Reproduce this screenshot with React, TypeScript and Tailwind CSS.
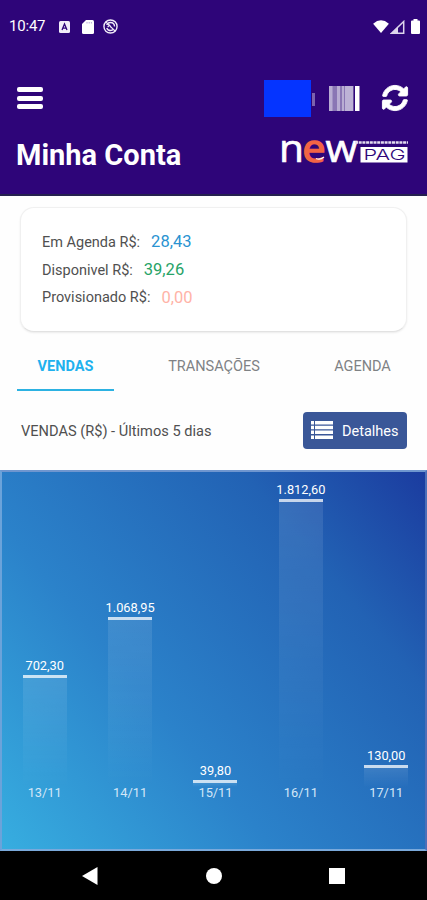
import { FaSyncAlt } from 'react-icons/fa';

const balances = [
  { label: 'Em Agenda R$:', value: '28,43', color: 'text-[#2a93d1]' },
  { label: 'Disponivel R$:', value: '39,26', color: 'text-[#27a367]' },
  { label: 'Provisionado R$:', value: '0,00', color: 'text-[#ffb3a7]' },
];

const sales = [
  { day: '13/11', label: '702,30', value: 702.3 },
  { day: '14/11', label: '1.068,95', value: 1068.95 },
  { day: '15/11', label: '39,80', value: 39.8 },
  { day: '16/11', label: '1.812,60', value: 1812.6 },
  { day: '17/11', label: '130,00', value: 130 },
];

const PX_PER_REAL = 0.1583;

function StatusBar() {
  return (
    <div className="flex h-[53px] items-center pl-[9px] pr-[7px] text-white">
      <span className="w-[37px] text-[15px] leading-none tracking-[-0.2px]">10:47</span>
      <svg className="ml-[13px]" width="11" height="12" viewBox="0 0 11 12">
        <rect width="11" height="12" rx="1.5" fill="#f1edf8" />
        <path d="M3 9 5.5 3 8 9M4 7.2h3" fill="none" stroke="#2e0579" strokeWidth="1.3" />
      </svg>
      <svg className="ml-3" width="12" height="14" viewBox="0 0 12 14">
        <path d="M4 0h6.5Q12 0 12 1.5v11q0 1.5-1.5 1.5h-9Q0 14 0 12.5V4z" fill="#fff" />
        <path d="M5 2v1.5M7.2 2v1.5M9.4 2v1.5" stroke="#b9abd8" strokeWidth="1" />
      </svg>
      <svg className="ml-[9px]" width="15" height="15" viewBox="0 0 16 16" fill="none" stroke="#f1edf8">
        <circle cx="8" cy="8" r="7" strokeWidth="1.5" />
        <path d="M4 6.5Q5 3.8 8 3.8q4 0 4.3 4.2M4 9.5q1 2.8 4 2.8 2 0 3-1" strokeWidth="1.5" />
        <path d="m3 3 10 10M5 8.5l2-2 2 3" strokeWidth="1.3" />
      </svg>
      <svg className="ml-auto" width="16" height="13" viewBox="0 0 17 14">
        <path d="M0 4Q8.5-3.5 17 4L8.5 14z" fill="#fff" />
      </svg>
      <svg className="ml-px" width="15" height="14" viewBox="0 0 15 14">
        <path d="M1.5 13.2 13.7 1.5v11.7z" fill="none" stroke="#ddd5ec" strokeWidth="1.5" />
        <path d="M8 7v6H1.5z" fill="#ddd5ec" />
      </svg>
      <svg className="ml-[6px]" width="9" height="15" viewBox="0 0 9 15">
        <path d="M2.5 0h4v1.5H8q1 0 1 1V14q0 1-1 1H1q-1 0-1-1V2.5q0-1 1-1h1.5z" fill="#fff" />
      </svg>
    </div>
  );
}

function BarcodeIcon() {
  return (
    <svg width="31" height="25" viewBox="0 0 31 25">
      <rect width="25" height="25" fill="#8a76b4" />
      <path d="M0 0h3.5v25H0zM8 0h3v25H8zM13 0h2v25h-2z" fill="#b9add3" />
      <path d="M16 0h8.5v25H16z" fill="#bdb2d6" />
      <path d="M26 0h4.5v25H26z" fill="#fff" />
      <path d="M24.5 0H26v25h-1.5z" fill="#2e0579" />
    </svg>
  );
}

function Logo() {
  return (
    <svg className="-my-[10px] overflow-visible" width="127" height="60" viewBox="0 0 127 60">
      <g fontFamily="Open Sans" fontSize="38" strokeWidth="0.7">
        <text x="-2" y="37" fill="#fff" stroke="#fff" textLength="25" lengthAdjust="spacingAndGlyphs">n</text>
        <text x="44.5" y="37" fill="#fff" stroke="#fff" textLength="32" lengthAdjust="spacingAndGlyphs">w</text>
        <text x="21.5" y="37" fill="#f26445" stroke="#f26445" strokeWidth="1.6" textLength="23" lengthAdjust="spacingAndGlyphs">e</text>
      </g>
      <path d="M35 33.5q4 2 8-1.5" fill="none" stroke="#fff" strokeWidth="1.2" />
      <path d="M74 17.5h53" stroke="#e3dcf0" strokeWidth="2.5" strokeDasharray="3 .7" />
      <rect x="79.5" y="22" width="47" height="15.5" fill="#fff" />
      <text x="82.5" y="35" fill="#2e0579" fontFamily="Inter" fontWeight="300" fontSize="15" textLength="42" lengthAdjust="spacingAndGlyphs">PAG</text>
    </svg>
  );
}

function Header() {
  return (
    <header className="h-[196px] border-b-2 border-[#25204f] bg-[#2e0579]">
      <StatusBar />
      <div className="flex h-[90px] items-center pl-[17px] pr-[19px]">
        <div className="flex w-[26px] flex-col gap-[3.5px]">
          <span className="h-[5px] rounded-xs bg-white" />
          <span className="h-[5px] rounded-xs bg-white" />
          <span className="h-[5px] rounded-xs bg-white" />
        </div>
        <div className="ml-auto h-[37px] w-[47px] bg-[#0534ff]" />
        <div className="mt-[3px] ml-px h-[13px] w-[3px] bg-[#7c62ae]" />
        <div className="ml-[14px]">
          <BarcodeIcon />
        </div>
        <FaSyncAlt className="ml-[22px] size-[26px] overflow-visible stroke-white stroke-[18px] text-white" />
      </div>
      <div className="-mt-[8px] flex items-center justify-between pl-4 pr-[19px]">
        <h1 className="text-[29px] leading-[40px] font-bold text-white">Minha Conta</h1>
        <Logo />
      </div>
    </header>
  );
}

function Balance() {
  return (
    <section className="mx-5 mt-[11px] h-[125px] rounded-[14px] border border-[#f0f0f0] border-b-[#e2e2e2] bg-white pt-[21px] pl-[21px] shadow-[0_1px_2px_rgba(0,0,0,0.08)]">
      {balances.map((item) => (
        <div key={item.label} className="flex h-[27.7px] items-center gap-[11px]">
          <span className="text-[14.5px] text-[#505050]">{item.label}</span>
          <span className={`text-[16.5px] ${item.color}`}>{item.value}</span>
        </div>
      ))}
    </section>
  );
}

function Tabs() {
  return (
    <nav className="mt-[11px] flex h-[48px] justify-between pr-4 pl-[17px] text-[14.5px] text-[#7f8285]">
      <span className="w-[97px] border-b-2 border-[#2cb2e2] pt-[13px] text-center font-bold text-[#1fb1ee]">VENDAS</span>
      <span className="pt-[13px]">TRANSAÇÕES</span>
      <span className="w-[97px] pt-[13px] text-center">AGENDA</span>
    </nav>
  );
}

function SalesChart() {
  return (
    <section className="flex h-[381px] overflow-hidden border-2 border-t-[#6f96cf] border-r-[#4c6fb8] border-b-[#7aa9db] border-l-[#6ba3da] bg-[linear-gradient(50deg,#37aee0_0%,#2b82ca_37%,#2262b4_75%,#1b3b9f_100%)] bg-origin-border">
      {sales.map((sale) => (
        <div key={sale.day} className="flex w-[85.4px] shrink-0 flex-col items-center">
          <div className="flex h-[315px] flex-col items-center justify-end">
            <span className="text-[12.8px] leading-[18px] text-white">{sale.label}</span>
            <div
              className="w-11 border-t-3 border-white/75 bg-linear-to-b from-white/10 to-white/0"
              style={{ height: sale.value * PX_PER_REAL + 1 }}
            />
          </div>
          <span className="-mt-[3px] text-[12.8px] leading-[18px] text-[#d3e6f7]">{sale.day}</span>
        </div>
      ))}
    </section>
  );
}

function NavigationBar() {
  return (
    <footer className="flex h-[49px] items-center justify-between bg-black px-[82px]">
      <svg width="16" height="18" viewBox="0 0 16 18">
        <path d="M0 9 15.5 0v18z" fill="#fff" />
      </svg>
      <span className="size-4 rounded-full bg-white" />
      <span className="size-4 bg-white" />
    </footer>
  );
}

export default function App() {
  return (
    <main className="h-[900px] w-[427px] overflow-hidden bg-[#fefefe] font-[Roboto,sans-serif]">
      <Header />
      <Balance />
      <Tabs />
      <div className="flex h-[79px] items-center justify-between pr-5 pl-[21px]">
        <h2 className="mt-[2px] text-[14.6px] text-[#505050]">VENDAS (R$) - Últimos 5 dias</h2>
        <button className="flex h-[37px] w-[104px] items-center rounded bg-[#3a5798] pt-[2px] pl-2 text-[14.5px] text-white">
          <svg className="mr-[9px] -mt-[3px]" width="22" height="18" viewBox="0 0 22 18" fill="#fff">
            <path d="M0 0h3v3.5H0zM0 4.8h3v3.5H0zM0 9.6h3v3.5H0zM0 14.4h3V18H0zM4 0h18v3.5H4zM4 4.8h18v3.5H4zM4 9.6h18v3.5H4zM4 14.4h18V18H4z" />
          </svg>
          Detalhes
        </button>
      </div>
      <SalesChart />
      <NavigationBar />
    </main>
  );
}
